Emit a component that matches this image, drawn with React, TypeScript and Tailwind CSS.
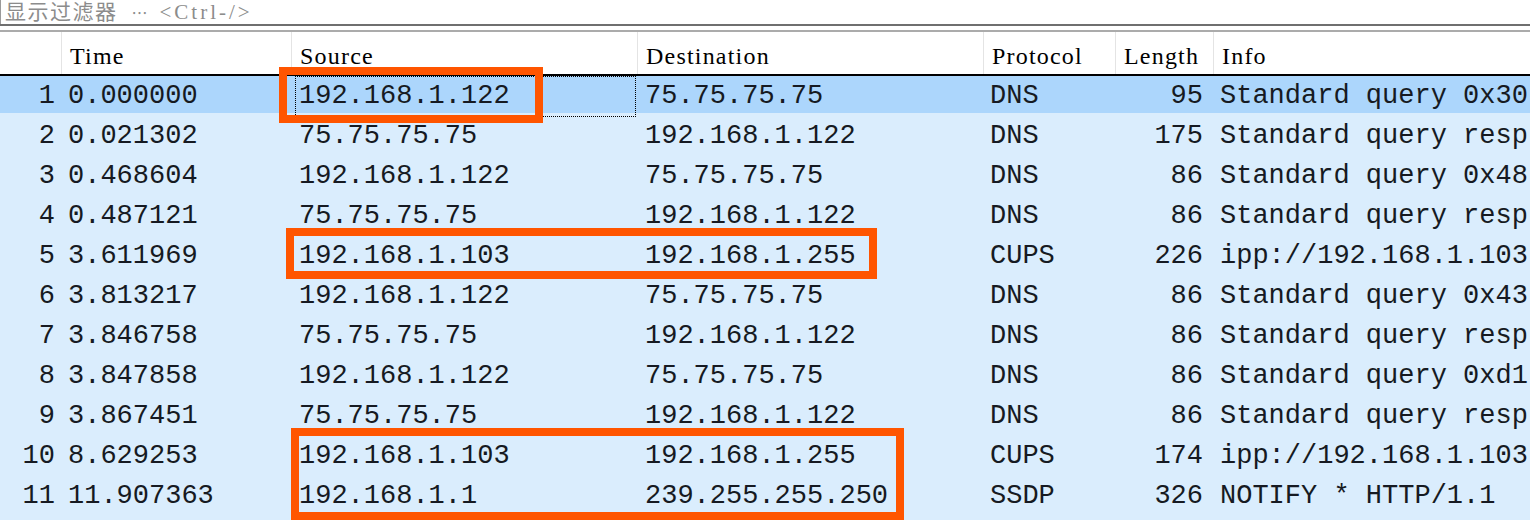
const packets = [
  { no: 1, time: "0.000000", src: "192.168.1.122", dst: "75.75.75.75", proto: "DNS", len: 95, info: "Standard query 0x30" },
  { no: 2, time: "0.021302", src: "75.75.75.75", dst: "192.168.1.122", proto: "DNS", len: 175, info: "Standard query resp" },
  { no: 3, time: "0.468604", src: "192.168.1.122", dst: "75.75.75.75", proto: "DNS", len: 86, info: "Standard query 0x48" },
  { no: 4, time: "0.487121", src: "75.75.75.75", dst: "192.168.1.122", proto: "DNS", len: 86, info: "Standard query resp" },
  { no: 5, time: "3.611969", src: "192.168.1.103", dst: "192.168.1.255", proto: "CUPS", len: 226, info: "ipp://192.168.1.103" },
  { no: 6, time: "3.813217", src: "192.168.1.122", dst: "75.75.75.75", proto: "DNS", len: 86, info: "Standard query 0x43" },
  { no: 7, time: "3.846758", src: "75.75.75.75", dst: "192.168.1.122", proto: "DNS", len: 86, info: "Standard query resp" },
  { no: 8, time: "3.847858", src: "192.168.1.122", dst: "75.75.75.75", proto: "DNS", len: 86, info: "Standard query 0xd1" },
  { no: 9, time: "3.867451", src: "75.75.75.75", dst: "192.168.1.122", proto: "DNS", len: 86, info: "Standard query resp" },
  { no: 10, time: "8.629253", src: "192.168.1.103", dst: "192.168.1.255", proto: "CUPS", len: 174, info: "ipp://192.168.1.103" },
  { no: 11, time: "11.907363", src: "192.168.1.1", dst: "239.255.255.250", proto: "SSDP", len: 326, info: "NOTIFY * HTTP/1.1" },
];

const cols = "grid grid-cols-[61px_230px_346px_346px_132px_98px_1fr]";
const head = "pl-[8px] pt-[5px] border-l border-[#e4e4e4] h-full flex items-center";

export default function App() {
  return (
    <div className="relative w-[1530px] h-[520px] overflow-hidden bg-white flex flex-col">
      {/* display filter bar */}
      <div className="h-[24px] flex items-center border-l border-[#9a9a9a] pl-[4px] text-[#8c8c8c] whitespace-nowrap font-['Liberation_Serif','Noto_Sans_CJK_SC',serif] text-[21px] leading-[22px]">
        <span className="tracking-[1.5px]">显示过滤器</span>
        <span className="ml-[14px] font-['Noto_Sans_CJK_SC',sans-serif] text-[16px] leading-[16px] tracking-[4px]">…</span>
        <span className="tracking-[3px] ml-[8px]">&lt;Ctrl-/&gt;</span>
      </div>
      <div className="h-[2px] bg-[#6f6f6f]" />
      <div className="h-[4px] bg-white" />
      <div className="h-[2px] bg-[#ababab]" />

      {/* column headers */}
      <div className={`${cols} h-[44px] border-b-2 border-black font-['Liberation_Serif',serif] text-[24px] text-black tracking-[1.2px]`}>
        <div />
        <div className={head}>Time</div>
        <div className={head}>Source</div>
        <div className={head}>Destination</div>
        <div className={head}>Protocol</div>
        <div className={head}>Length</div>
        <div className={head}>Info</div>
      </div>

      {/* packet list */}
      <div className="flex-1 bg-[#daedfd] font-['Liberation_Mono',monospace] text-[27px] text-[#161a22] whitespace-nowrap">
        {packets.map((p, i) => (
          <div
            key={p.no}
            className={`${cols} items-center ${i === 0 ? "h-[37px] bg-[#acd6fc]" : "h-[40px] pt-[3px]"}`}
          >
            <div className="text-right pr-[6px]">{p.no}</div>
            <div className="pl-[7px] overflow-hidden">{p.time}</div>
            <div className="relative h-full flex items-center pl-[8px] overflow-hidden">
              {i === 0 && <div className="absolute top-0 bottom-0 left-[4px] right-[1px] border border-dotted border-black" />}
              {p.src}
            </div>
            <div className="pl-[8px] overflow-hidden">{p.dst}</div>
            <div className="pl-[7px] overflow-hidden">{p.proto}</div>
            <div className="text-right pr-[10px]">{p.len}</div>
            <div className="pl-[7px] overflow-hidden">{p.info}</div>
          </div>
        ))}
      </div>

      {/* annotation boxes */}
      <div className="absolute left-[279px] top-[67px] w-[264px] h-[56px] border-[8px] border-[#ff5500]" />
      <div className="absolute left-[286px] top-[228px] w-[591px] h-[51px] border-[8px] border-[#ff5500]" />
      <div className="absolute left-[291px] top-[428px] w-[613px] h-[92px] border-[8px] border-[#ff5500]" />
    </div>
  );
}
